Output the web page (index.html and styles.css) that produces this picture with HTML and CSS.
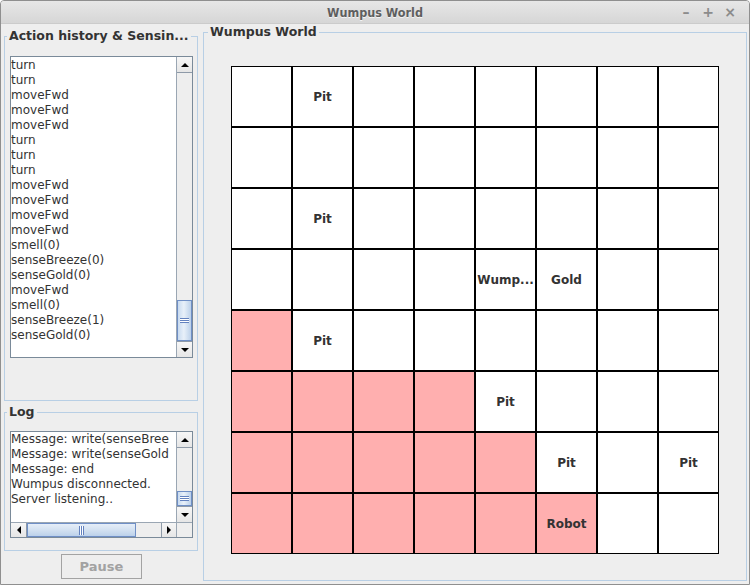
FILE: index.html
```html
<!DOCTYPE html>
<html>
<head>
<meta charset="utf-8">
<link rel="stylesheet" href="styles.css">
</head>
<body>
<div class="window">
  <div class="titlebar">
    <span></span>
    <span class="title">Wumpus World</span>
    <div class="controls"><span>&#8211;</span><span>+</span><span>&#215;</span></div>
  </div>
  <div class="content">
    <div class="leftcol">
      <fieldset class="panel history">
        <legend>Action history &amp; Sensin...</legend>
        <div class="listbox">
          <div class="items">
            <div>turn</div>
            <div>turn</div>
            <div>moveFwd</div>
            <div>moveFwd</div>
            <div>moveFwd</div>
            <div>turn</div>
            <div>turn</div>
            <div>turn</div>
            <div>moveFwd</div>
            <div>moveFwd</div>
            <div>moveFwd</div>
            <div>moveFwd</div>
            <div>smell(0)</div>
            <div>senseBreeze(0)</div>
            <div>senseGold(0)</div>
            <div>moveFwd</div>
            <div>smell(0)</div>
            <div>senseBreeze(1)</div>
            <div>senseGold(0)</div>
          </div>
          <div class="vscroll">
            <div class="sbtn up-btn"><span class="tri tri-up"></span></div>
            <div class="track"><div class="thumb vthumb list-thumb"><span class="grip hgrip"></span></div></div>
            <div class="sbtn down-btn"><span class="tri tri-down"></span></div>
          </div>
        </div>
      </fieldset>
      <fieldset class="panel log">
        <legend>Log</legend>
        <div class="logbox">
          <div class="logtext">
            <div>Message: write(senseBree</div>
            <div>Message: write(senseGold</div>
            <div>Message: end</div>
            <div>Wumpus disconnected.</div>
            <div>Server listening..</div>
          </div>
          <div class="vscroll">
            <div class="sbtn up-btn"><span class="tri tri-up"></span></div>
            <div class="track"><div class="thumb vthumb log-thumb"><span class="grip hgrip"></span></div></div>
            <div class="sbtn down-btn"><span class="tri tri-down"></span></div>
          </div>
          <div class="hscroll">
            <div class="sbtn left-btn"><span class="tri tri-left"></span></div>
            <div class="thumb hthumb"><span class="grip vgrip"></span></div>
            <div class="htrack"></div>
            <div class="sbtn right-btn"><span class="tri tri-right"></span></div>
          </div>
          <div class="corner"></div>
        </div>
      </fieldset>
      <button class="pause" disabled>Pause</button>
    </div>
    <fieldset class="panel world">
      <legend>Wumpus World</legend>
      <div class="grid">
        <div class="cell"></div><div class="cell">Pit</div><div class="cell"></div><div class="cell"></div><div class="cell"></div><div class="cell"></div><div class="cell"></div><div class="cell"></div>
        <div class="cell"></div><div class="cell"></div><div class="cell"></div><div class="cell"></div><div class="cell"></div><div class="cell"></div><div class="cell"></div><div class="cell"></div>
        <div class="cell"></div><div class="cell">Pit</div><div class="cell"></div><div class="cell"></div><div class="cell"></div><div class="cell"></div><div class="cell"></div><div class="cell"></div>
        <div class="cell"></div><div class="cell"></div><div class="cell"></div><div class="cell"></div><div class="cell">Wump...</div><div class="cell">Gold</div><div class="cell"></div><div class="cell"></div>
        <div class="cell visited"></div><div class="cell">Pit</div><div class="cell"></div><div class="cell"></div><div class="cell"></div><div class="cell"></div><div class="cell"></div><div class="cell"></div>
        <div class="cell visited"></div><div class="cell visited"></div><div class="cell visited"></div><div class="cell visited"></div><div class="cell">Pit</div><div class="cell"></div><div class="cell"></div><div class="cell"></div>
        <div class="cell visited"></div><div class="cell visited"></div><div class="cell visited"></div><div class="cell visited"></div><div class="cell visited"></div><div class="cell">Pit</div><div class="cell"></div><div class="cell">Pit</div>
        <div class="cell visited"></div><div class="cell visited"></div><div class="cell visited"></div><div class="cell visited"></div><div class="cell visited"></div><div class="cell visited">Robot</div><div class="cell"></div><div class="cell"></div>
      </div>
    </fieldset>
  </div>
</div>
</body>
</html>
```

FILE: styles.css
```css
html, body {
  margin: 0;
  padding: 0;
  background: #ffffff;
}
body {
  font-family: "DejaVu Sans", sans-serif;
}
.window {
  width: 750px;
  height: 585px;
  box-sizing: border-box;
  border: 1px solid #8f8f8f;
  border-radius: 4px 4px 0 0;
  background: #eeeeee;
  display: flex;
  flex-direction: column;
  overflow: hidden;
}
.titlebar {
  flex: none;
  height: 23px;
  box-sizing: border-box;
  border-bottom: 1px solid #cbcbcb;
  background: linear-gradient(#e7e7e7, #d6d6d6);
  display: grid;
  grid-template-columns: 1fr auto 1fr;
  align-items: center;
}
.title {
  font-family: "DejaVu Sans Condensed", "DejaVu Sans", sans-serif;
  font-weight: bold;
  font-size: 12.5px;
  color: #5e5e5e;
  text-shadow: 0 1px 0 #f4f4f4;
}
.controls {
  justify-self: end;
  display: flex;
  padding-right: 8px;
  color: #8c8c8c;
  font-size: 14px;
  font-weight: bold;
}
.controls span {
  width: 22px;
  text-align: center;
}
.content {
  flex: 1;
  display: flex;
  gap: 5px;
  padding: 1px 2px 3px 3px;
  min-height: 0;
}
.leftcol {
  width: 194px;
  flex: none;
  display: flex;
  flex-direction: column;
}
.panel {
  margin: 0;
  min-width: 0;
  box-sizing: border-box;
  border: 1px solid #b8cfe5;
}
.panel legend {
  margin-left: -3px;
  padding: 0 2px;
  font-weight: bold;
  font-size: 12.5px;
  line-height: 14px;
  color: #333333;
  white-space: nowrap;
}
.world legend {
  margin-left: -23px;
}
.history {
  margin-top: 4px;
  height: 372px;
  padding: 13px 4px 0 5px;
}
.log {
  margin-top: 4px;
  height: 146px;
  padding: 12px 4px 0 5px;
}
.world {
  flex: 1;
  padding: 27px 27px 0 27px;
}
.listbox {
  height: 302px;
  box-sizing: border-box;
  border: 1px solid #7a8a99;
  background: #ffffff;
  display: flex;
}
.items, .logtext {
  flex: 1;
  overflow: hidden;
  font-size: 12px;
  line-height: 15px;
  color: #333333;
  white-space: nowrap;
  padding-top: 1px;
}
.logtext {
  padding-top: 0;
}
.vscroll {
  width: 16px;
  flex: none;
  display: flex;
  flex-direction: column;
  box-sizing: border-box;
  border-left: 1px solid #9aa6b3;
  background: #eeeeee;
}
.sbtn {
  flex: none;
  box-sizing: border-box;
  background: linear-gradient(#f6f6f6, #e6e6e6);
  display: flex;
  align-items: center;
  justify-content: center;
}
.up-btn, .down-btn {
  height: 16px;
}
.up-btn {
  border-bottom: 1px solid #8e9aa8;
}
.down-btn {
  border-top: 1px solid #8e9aa8;
}
.track {
  flex: 1;
  display: flex;
  flex-direction: column;
  justify-content: flex-end;
}
.thumb {
  box-sizing: border-box;
  border: 1px solid #6f8fc6;
  display: flex;
  align-items: center;
  justify-content: center;
}
.vthumb {
  background: linear-gradient(to right, #c9dbf0, #e8f0f9 45%, #bcd1ea);
}
.list-thumb {
  height: 41px;
}
.log-thumb {
  height: 15px;
}
.hthumb {
  width: 109px;
  background: linear-gradient(#e6eef8, #d3e1f1 50%, #bcd1ea);
}
.grip {
  display: block;
}
.hgrip {
  width: 9px;
  height: 5px;
  background: repeating-linear-gradient(#6382bf 0 1px, #ffffff 1px 2px);
}
.vgrip {
  width: 5px;
  height: 9px;
  background: repeating-linear-gradient(to right, #6382bf 0 1px, #ffffff 1px 2px);
}
.tri {
  display: block;
  width: 0;
  height: 0;
}
.tri-up {
  border-left: 4px solid transparent;
  border-right: 4px solid transparent;
  border-bottom: 4px solid #000000;
}
.tri-down {
  border-left: 4px solid transparent;
  border-right: 4px solid transparent;
  border-top: 4px solid #000000;
}
.tri-left {
  border-top: 4px solid transparent;
  border-bottom: 4px solid transparent;
  border-right: 4px solid #000000;
}
.tri-right {
  border-top: 4px solid transparent;
  border-bottom: 4px solid transparent;
  border-left: 4px solid #000000;
}
.logbox {
  height: 107px;
  box-sizing: border-box;
  border: 1px solid #7a8a99;
  background: #ffffff;
  display: grid;
  grid-template-columns: 1fr 16px;
  grid-template-rows: 90px 15px;
}
.logtext {
  min-width: 0;
}
.hscroll {
  display: flex;
  box-sizing: border-box;
  border-top: 1px solid #9aa6b3;
  background: #eeeeee;
}
.left-btn {
  width: 16px;
  border-right: 1px solid #8e9aa8;
}
.right-btn {
  width: 15px;
  border-left: 1px solid #8e9aa8;
}
.htrack {
  flex: 1;
}
.corner {
  background: #eeeeee;
  border-top: 1px solid #9aa6b3;
  border-left: 1px solid #9aa6b3;
}
.pause {
  margin: 3px 0 0 57px;
  width: 81px;
  height: 25px;
  box-sizing: border-box;
  border: 1px solid #a3a3a3;
  border-radius: 0;
  background: #eeeeee;
  color: #a2a2a2;
  font-family: "DejaVu Sans", sans-serif;
  font-weight: bold;
  font-size: 13px;
  padding: 0;
}
.grid {
  display: grid;
  grid-template-columns: repeat(8, 61px);
  grid-template-rows: repeat(8, 61px);
  width: 488px;
}
.cell {
  box-sizing: border-box;
  border: 1px solid #000000;
  background: #ffffff;
  display: flex;
  align-items: center;
  justify-content: center;
  font-weight: bold;
  font-size: 12px;
  color: #333333;
  white-space: nowrap;
  overflow: hidden;
}
.visited {
  background: #ffafaf;
}
```
